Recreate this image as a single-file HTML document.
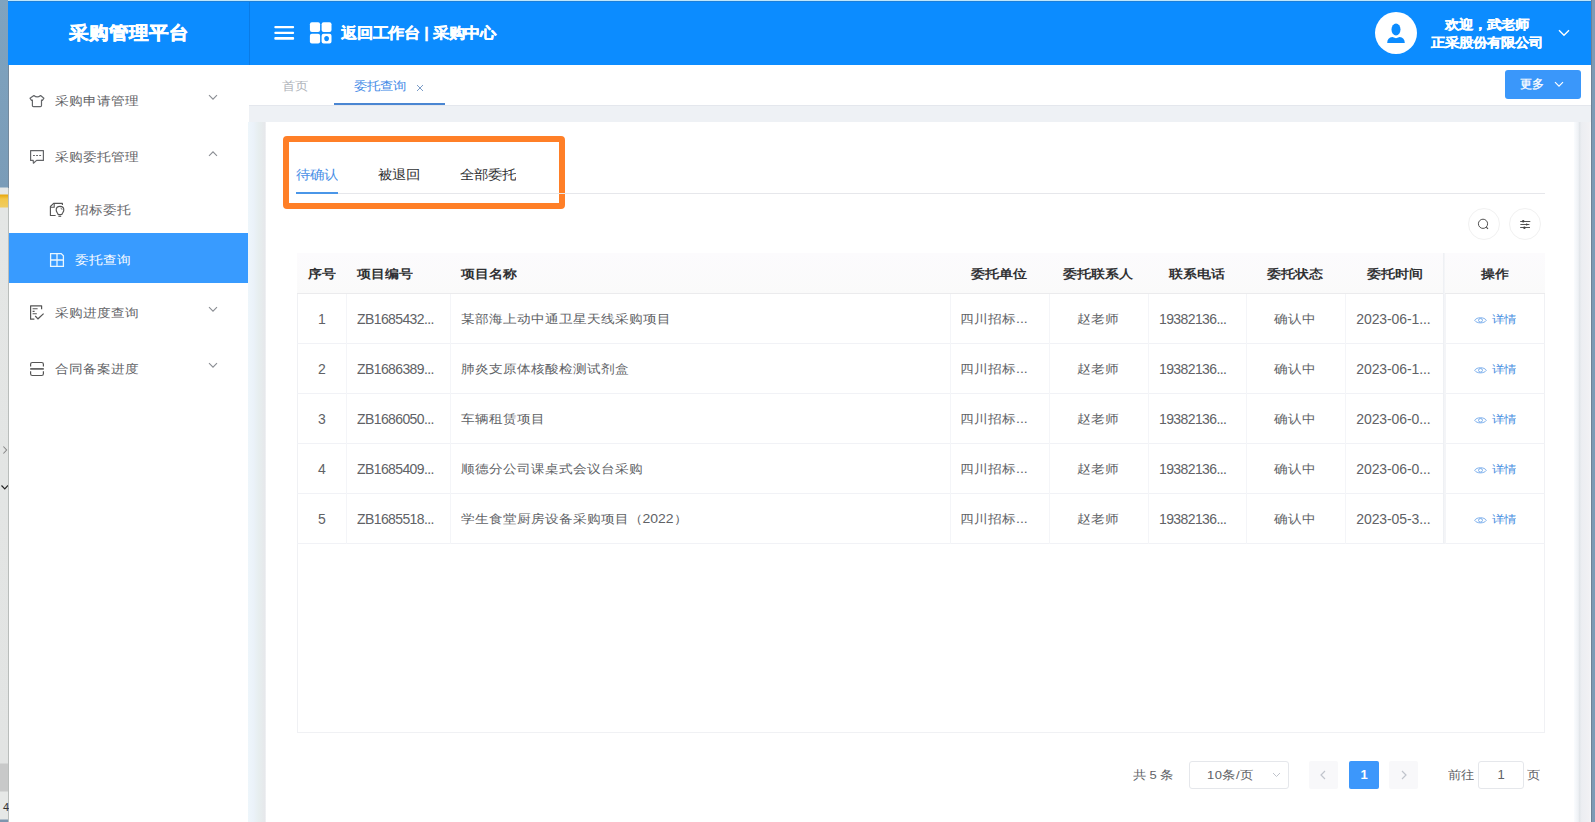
<!DOCTYPE html>
<html><head><meta charset="utf-8">
<style>
*{box-sizing:border-box;margin:0;padding:0}
html,body{width:1595px;height:822px;overflow:hidden;background:#eef1f5;font-family:"Liberation Sans",sans-serif;position:relative}
.a{position:absolute}
svg{display:block}
#lstrip{left:0;top:0;width:8px;height:822px;background:linear-gradient(#7fa3bf 0,#7a9cb8 187px,#e6e8e7 188px,#e6e8e7 194px,#e8a810 195px,#f2c64a 199px,#f0cc60 207px,#e4e6e5 208px,#e2e4e3 763px,#c8c9c9 764px,#c8c9c9 791px,#e6e8e7 792px,#e6e8e7 819px,#7d96ae 820px)}
#lstripedge{left:8px;top:65px;width:1px;height:757px;background:linear-gradient(#74899c 0,#74899c 123px,#b9bdbb 123px,#b9bdbb 100%)}
#rstrip{left:1591px;top:0;width:4px;height:822px;background:linear-gradient(90deg,#6e8295 0,#6e8295 25%,#7f9ab3 26%,#7a9cb8 100%)}
#header{left:8px;top:0;width:1583px;height:65px;background:#0c8cff}
#logo{left:8px;top:1px;width:241px;height:65px;color:#fff;font-size:20px;font-weight:bold;text-align:center;line-height:65px;-webkit-text-stroke:0.6px #fff;transform:scaleY(0.92)}
#hsep{left:249px;top:0;width:1px;height:65px;background:#0a7be6}
#sidebar{left:9px;top:65px;width:240px;height:757px;background:#fff}
#tabsbar{left:249px;top:65px;width:1342px;height:41px;background:#fff;border-bottom:1px solid #e4e7ed}
#card{left:266px;top:122px;width:1308px;height:700px;background:#fff}
#lgut{left:248px;top:122px;width:18px;height:700px;background:linear-gradient(90deg,#eef6fb 0,#ebf2f9 30%,#e7eeef 60%,#e6e8eb 92%,#f3f3f6 100%)}
#rgut{left:1574px;top:122px;width:17px;height:700px;background:linear-gradient(90deg,#fafcfe 0,#eef1f5 25%,#e2e6ea 32%,#eceef2 45%,#f1f1f4 90%,#f6fafc 100%)}
.mi{position:absolute;font-size:14px;color:#5f6266;line-height:20px;white-space:nowrap;transform:scaleY(0.88)}
.ic{position:absolute}
.arr{position:absolute}
.tab{position:absolute;top:164px;font-size:14px;color:#303133;line-height:20px;white-space:nowrap;transform:scaleY(0.9)}
.th{position:absolute;top:264px;font-size:14px;font-weight:bold;color:#303133;line-height:20px;white-space:nowrap;transform:scaleY(0.86)}
.td{position:absolute;font-size:14px;color:#606266;line-height:50px;white-space:nowrap;height:50px;transform:scaleY(0.88)}
.td.num,.td.dt{transform:scaleY(1.08)}
.num{letter-spacing:-0.6px}
.dt{letter-spacing:-0.1px}
.pg{position:absolute;top:765px;font-size:13px;color:#606266;line-height:20px;white-space:nowrap;transform:scaleY(0.9)}
</style></head><body>
<div id="lstrip" class="a"></div><div id="lstripedge" class="a"></div>
<svg class="a" style="left:1px;top:445px" width="7" height="50" viewBox="0 0 7 50"><path d="M2.4 1.5 L5.6 5 L2.4 8.5" fill="none" stroke="#888" stroke-width="1.1"/><path d="M0.5 40.5 L3.8 43.8 L7 40.5" fill="none" stroke="#222" stroke-width="1.2"/></svg>
<div class="a" style="left:3px;top:800px;font-size:11px;color:#333;line-height:14px">4</div>
<div id="rstrip" class="a"></div>
<div id="header" class="a"></div>
<div id="logo" class="a">采购管理平台</div>
<div id="hsep" class="a"></div>
<div class="a" style="left:8px;top:0;width:1583px;height:1px;background:#bfe6fb"></div><div class="a" style="left:8px;top:1px;width:1583px;height:1px;background:#1c7fd9"></div>

<!-- header left controls -->
<svg class="a" style="left:274px;top:25px" width="21" height="16" viewBox="0 0 21 16"><rect x="0.3" y="0.9" width="19.8" height="2.3" rx="1" fill="#fff"/><rect x="0.3" y="6.8" width="19.8" height="2.3" rx="1" fill="#fff"/><rect x="0.3" y="12.1" width="19.8" height="2.6" rx="1" fill="#fff"/></svg>
<svg class="a" style="left:309px;top:22px" width="23" height="22" viewBox="0 0 23 22"><rect x="0.9" y="0.2" width="10.2" height="9.9" rx="2" fill="#fff"/><rect x="12.6" y="0.2" width="9.9" height="9.9" rx="2" fill="#fff"/><rect x="0.9" y="11.8" width="10.2" height="9.6" rx="2" fill="#fff"/><path fill-rule="evenodd" fill="#fff" d="M14.6 11.8 H20.5 Q22.5 11.8 22.5 13.8 V19.4 Q22.5 21.4 20.5 21.4 H14.6 Q12.6 21.4 12.6 19.4 V13.8 Q12.6 11.8 14.6 11.8 Z M17.6 14 C16.2 14 15.2 15 15.2 16.6 C15.2 18.2 16.2 19.2 17.6 19.2 C19 19.2 20 18.2 20 16.6 C20 15 19 14 17.6 14 Z"/></svg>
<div class="a" style="left:341px;top:22px;font-size:16px;font-weight:bold;color:#fff;line-height:22px;white-space:nowrap;letter-spacing:-0.2px;-webkit-text-stroke:0.35px #fff;transform:scaleY(0.92)">返回工作台 | 采购中心</div>

<!-- header right -->
<div class="a" style="left:1375px;top:12px;width:42px;height:42px;border-radius:50%;background:#fff"></div>
<svg class="a" style="left:1386px;top:23px" width="21" height="21" viewBox="0 0 21 21"><ellipse cx="10" cy="6.5" rx="4.5" ry="6" fill="#0c8cff"/><path d="M1.2 20 C1.2 16.4 3.2 14.5 6.4 14.1 L10 15.2 L13.6 14.1 C16.8 14.5 18.8 16.4 18.8 20 Z" fill="#0c8cff"/></svg>
<div class="a" style="left:1431px;top:15px;width:112px;text-align:center;font-size:14px;font-weight:bold;color:#fff;line-height:18px;white-space:nowrap;-webkit-text-stroke:0.3px #fff;transform:scaleY(0.9)">欢迎，武老师</div><div class="a" style="left:1431px;top:33px;width:112px;text-align:center;font-size:14px;font-weight:bold;color:#fff;line-height:18px;white-space:nowrap;-webkit-text-stroke:0.3px #fff;transform:scaleY(0.9)">正采股份有限公司</div>
<svg class="a" style="left:1558px;top:29px" width="12" height="8" viewBox="0 0 12 8"><path d="M1 1.2 L6 6.2 L11 1.2" fill="none" stroke="#fff" stroke-width="1.4"/></svg>

<div id="sidebar" class="a"></div>
<!-- sidebar items -->
<svg class="ic" style="left:29px;top:94px" width="16" height="14" viewBox="0 0 16 14"><path d="M4.9 1.5 Q8.2 4.4 11.6 1.5 L14.9 4.2 L13.4 6.5 L12.5 6.1 L12.5 11.5 Q12.5 12.6 11.4 12.6 L4.5 12.6 Q3.4 12.6 3.4 11.5 L3.4 6.1 L2.5 6.5 L1 4.2 Z" fill="none" stroke="#646669" stroke-width="1.2" stroke-linejoin="round"/></svg>
<div class="mi" style="left:55px;top:91px">采购申请管理</div>
<svg class="arr" style="left:208px;top:94px" width="10" height="7" viewBox="0 0 10 7"><path d="M1 1.2 L5 5.2 L9 1.2" fill="none" stroke="#8a8d93" stroke-width="1.1"/></svg>

<svg class="ic" style="left:29px;top:149px" width="16" height="16" viewBox="0 0 16 16"><path d="M1.6 1.6 L14.4 1.6 L14.4 11.4 L7.6 11.4 L4.4 14.2 L4.2 11.4 L1.6 11.4 Z" fill="none" stroke="#646669" stroke-width="1.2" stroke-linejoin="round"/><path d="M4 6.5 H5.9 M7.1 6.5 H9 M10.2 6.5 H12.1" stroke="#646669" stroke-width="1"/></svg>
<div class="mi" style="left:55px;top:147px">采购委托管理</div>
<svg class="arr" style="left:208px;top:150px" width="10" height="7" viewBox="0 0 10 7"><path d="M1 5.8 L5 1.8 L9 5.8" fill="none" stroke="#8a8d93" stroke-width="1.1"/></svg>

<svg class="ic" style="left:49px;top:202px" width="16" height="16" viewBox="0 0 16 16"><path d="M13.4 3 V1.4 H4.6 L1.4 4.5 V13.5 H6.6" fill="none" stroke="#555" stroke-width="1.15" stroke-linejoin="round"/><path d="M1.4 5.3 H5.2 V1.4" fill="none" stroke="#555" stroke-width="1.1"/><path d="M11 4.4 C13.2 4.4 14.8 6 14.8 8 C14.8 9.8 13.5 10.7 12.8 12.5 L9.2 12.5 C8.5 10.7 7.2 9.8 7.2 8 C7.2 6 8.8 4.4 11 4.4 Z" fill="none" stroke="#555" stroke-width="1.15"/><path d="M9.4 14.2 H12.2" stroke="#555" stroke-width="1.3"/><path d="M11.6 6.1 Q12.9 6.5 13.1 7.7" fill="none" stroke="#555" stroke-width="0.9"/></svg>
<div class="mi" style="left:75px;top:200px">招标委托</div>

<div class="a" style="left:9px;top:233px;width:240px;height:50px;background:#389bff"></div>
<svg class="ic" style="left:49px;top:252px" width="16" height="16" viewBox="0 0 16 16"><path d="M1.6 1.6 L12.2 1.6 L14.4 3.8 L14.4 14.4 L1.6 14.4 Z M8 1.6 V14.4 M1.6 8 H14.4" fill="none" stroke="#e8f6ff" stroke-width="1.3"/></svg>
<div class="mi" style="left:75px;top:250px;color:#fff">委托查询</div>

<svg class="ic" style="left:29px;top:304px" width="16" height="17" viewBox="0 0 16 17"><path d="M5.4 15.2 L1.6 15.2 L1.6 1.8 L12.6 1.8 L12.6 5.2" fill="none" stroke="#555" stroke-width="1.2" stroke-linejoin="round"/><path d="M3.6 4.8 H8.6 M3.6 7.4 H5.6 M3.6 9.8 H7.8" stroke="#555" stroke-width="1.1"/><path d="M6.2 12 L9 14.8 L14.6 9.6" fill="none" stroke="#555" stroke-width="1.2"/></svg>
<div class="mi" style="left:55px;top:303px">采购进度查询</div>
<svg class="arr" style="left:208px;top:306px" width="10" height="7" viewBox="0 0 10 7"><path d="M1 1.2 L5 5.2 L9 1.2" fill="none" stroke="#8a8d93" stroke-width="1.1"/></svg>

<svg class="ic" style="left:29px;top:360px" width="16" height="17" viewBox="0 0 16 17"><path d="M1.6 6.4 V4.3 Q1.6 2.5 3.4 2.5 L12.6 2.5 Q14.4 2.5 14.4 4.3 V6.4 M1.6 11.2 V13.7 Q1.6 15.5 3.4 15.5 L12.6 15.5 Q14.4 15.5 14.4 13.7 V11.2" fill="none" stroke="#555" stroke-width="1.2"/><path d="M1.2 8.9 H14.8" stroke="#555" stroke-width="1.6"/></svg>
<div class="mi" style="left:55px;top:359px">合同备案进度</div>
<svg class="arr" style="left:208px;top:362px" width="10" height="7" viewBox="0 0 10 7"><path d="M1 1.2 L5 5.2 L9 1.2" fill="none" stroke="#8a8d93" stroke-width="1.1"/></svg>

<div id="tabsbar" class="a"></div>
<div class="a" style="left:282px;top:76px;font-size:13px;color:#b1b5bb;line-height:20px;transform:scaleY(0.9)">首页</div>
<div class="a" style="left:354px;top:76px;font-size:13px;color:#4088e6;line-height:20px;transform:scaleY(0.9)">委托查询</div>
<svg class="a" style="left:416px;top:84px" width="8" height="8" viewBox="0 0 8 8"><path d="M1 1 L7 7 M7 1 L1 7" stroke="#7a9cc8" stroke-width="1"/></svg>
<div class="a" style="left:334px;top:103px;width:111px;height:2px;background:#4a86d2"></div>

<div class="a" style="left:1505px;top:70px;width:76px;height:29px;border-radius:3px;background:#3a97fa"></div>
<div class="a" style="left:1520px;top:75px;font-size:12px;color:#fff;line-height:18px;-webkit-text-stroke:0.3px #fff">更多</div>
<svg class="a" style="left:1554px;top:81px" width="10" height="7" viewBox="0 0 10 7"><path d="M1 1.2 L5 5.2 L9 1.2" fill="none" stroke="#fff" stroke-width="1.2"/></svg>

<div id="lgut" class="a"></div><div id="rgut" class="a"></div><div id="card" class="a"></div>
<div class="a" style="left:283px;top:136px;width:282px;height:73px;border:6px solid #ff7f27;border-radius:4px"></div>
<div class="a" style="left:297px;top:193px;width:1248px;height:1px;background:#e6e7eb"></div>
<div class="tab" style="left:296px;color:#4a8fe6">待确认</div>
<div class="tab" style="left:378px">被退回</div>
<div class="tab" style="left:460px">全部委托</div>
<div class="a" style="left:296px;top:192px;width:42px;height:2px;background:#4a96e8"></div>
<div class="a" style="left:1468px;top:208px;width:32px;height:32px;border-radius:50%;border:1px solid #f1f1f1"></div>
<svg class="a" style="left:1477px;top:218px" width="13" height="13" viewBox="0 0 13 13"><circle cx="6" cy="5.8" r="4.6" fill="none" stroke="#4a4a4a" stroke-width="0.95"/><path d="M9.3 9.2 L11 10.9" stroke="#4a4a4a" stroke-width="1.1"/></svg>
<div class="a" style="left:1509px;top:208px;width:32px;height:32px;border-radius:50%;border:1px solid #f1f1f1"></div>
<svg class="a" style="left:1519px;top:219px" width="12" height="11" viewBox="0 0 12 11"><path d="M1.2 2.5 H11.3 M1.4 5.5 H10.4 M1.2 8.5 H11" stroke="#555" stroke-width="1"/><circle cx="4.2" cy="2.3" r="1.2" fill="#444"/><path d="M7.2 4.2 L9.6 5.5 L7.2 6.8 Z" fill="#444"/><circle cx="5.4" cy="8.7" r="1.2" fill="#444"/></svg>
<div class="a" style="left:297px;top:253px;width:1248px;height:480px;border:1px solid #f0f1f4;border-top:none"></div>
<div class="a" style="left:297px;top:253px;width:1248px;height:41px;background:linear-gradient(#fcfbfd,#fafafa);border-bottom:1px solid #ebebed"></div>
<div class="th" style="left:297px;width:49.0px;text-align:center">序号</div>
<div class="th" style="left:357px;width:92.5px">项目编号</div>
<div class="th" style="left:460.5px;width:489.2px">项目名称</div>
<div class="th" style="left:949.7px;width:99.1px;text-align:center">委托单位</div>
<div class="th" style="left:1048.8px;width:99.2px;text-align:center">委托联系人</div>
<div class="th" style="left:1148px;width:97.5px;text-align:center">联系电话</div>
<div class="th" style="left:1245.5px;width:99.8px;text-align:center">委托状态</div>
<div class="th" style="left:1345.3px;width:99.4px;text-align:center">委托时间</div>
<div class="th" style="left:1444.7px;width:100.3px;text-align:center">操作</div>
<div class="a" style="left:297px;top:343px;width:1248px;height:1px;background:#f1f2f6"></div>
<div class="td num" style="left:297px;top:294px;width:49.0px;text-align:center">1</div>
<div class="td num" style="left:357px;top:294px;width:92.5px">ZB1685432...</div>
<div class="td" style="left:460.5px;top:294px;width:489.2px">某部海上动中通卫星天线采购项目</div>
<div class="td" style="left:960px;top:294px;width:88.1px">四川招标...</div>
<div class="td" style="left:1048.8px;top:294px;width:99.2px;text-align:center">赵老师</div>
<div class="td num" style="left:1159px;top:294px;width:86.5px">19382136...</div>
<div class="td" style="left:1245.5px;top:294px;width:99.8px;text-align:center">确认中</div>
<div class="td dt" style="left:1356.3px;top:294px;width:88.4px">2023-06-1...</div>
<div class="td" style="left:1444.7px;top:294px;width:100.3px;text-align:center"><svg style="display:inline-block;vertical-align:-1px;margin-right:5px" width="13" height="9" viewBox="0 0 13 9"><path d="M0.7 4.5 C2.6 0.6 10.4 0.6 12.3 4.5 C10.4 8.4 2.6 8.4 0.7 4.5 Z" fill="none" stroke="#6aa4ea" stroke-width="0.9"/><circle cx="6.5" cy="4.5" r="2" fill="none" stroke="#6aa4ea" stroke-width="0.9"/></svg><span style="font-size:12px;color:#4a90e2">详情</span></div>
<div class="a" style="left:297px;top:393px;width:1248px;height:1px;background:#f1f2f6"></div>
<div class="td num" style="left:297px;top:344px;width:49.0px;text-align:center">2</div>
<div class="td num" style="left:357px;top:344px;width:92.5px">ZB1686389...</div>
<div class="td" style="left:460.5px;top:344px;width:489.2px">肺炎支原体核酸检测试剂盒</div>
<div class="td" style="left:960px;top:344px;width:88.1px">四川招标...</div>
<div class="td" style="left:1048.8px;top:344px;width:99.2px;text-align:center">赵老师</div>
<div class="td num" style="left:1159px;top:344px;width:86.5px">19382136...</div>
<div class="td" style="left:1245.5px;top:344px;width:99.8px;text-align:center">确认中</div>
<div class="td dt" style="left:1356.3px;top:344px;width:88.4px">2023-06-1...</div>
<div class="td" style="left:1444.7px;top:344px;width:100.3px;text-align:center"><svg style="display:inline-block;vertical-align:-1px;margin-right:5px" width="13" height="9" viewBox="0 0 13 9"><path d="M0.7 4.5 C2.6 0.6 10.4 0.6 12.3 4.5 C10.4 8.4 2.6 8.4 0.7 4.5 Z" fill="none" stroke="#6aa4ea" stroke-width="0.9"/><circle cx="6.5" cy="4.5" r="2" fill="none" stroke="#6aa4ea" stroke-width="0.9"/></svg><span style="font-size:12px;color:#4a90e2">详情</span></div>
<div class="a" style="left:297px;top:443px;width:1248px;height:1px;background:#f1f2f6"></div>
<div class="td num" style="left:297px;top:394px;width:49.0px;text-align:center">3</div>
<div class="td num" style="left:357px;top:394px;width:92.5px">ZB1686050...</div>
<div class="td" style="left:460.5px;top:394px;width:489.2px">车辆租赁项目</div>
<div class="td" style="left:960px;top:394px;width:88.1px">四川招标...</div>
<div class="td" style="left:1048.8px;top:394px;width:99.2px;text-align:center">赵老师</div>
<div class="td num" style="left:1159px;top:394px;width:86.5px">19382136...</div>
<div class="td" style="left:1245.5px;top:394px;width:99.8px;text-align:center">确认中</div>
<div class="td dt" style="left:1356.3px;top:394px;width:88.4px">2023-06-0...</div>
<div class="td" style="left:1444.7px;top:394px;width:100.3px;text-align:center"><svg style="display:inline-block;vertical-align:-1px;margin-right:5px" width="13" height="9" viewBox="0 0 13 9"><path d="M0.7 4.5 C2.6 0.6 10.4 0.6 12.3 4.5 C10.4 8.4 2.6 8.4 0.7 4.5 Z" fill="none" stroke="#6aa4ea" stroke-width="0.9"/><circle cx="6.5" cy="4.5" r="2" fill="none" stroke="#6aa4ea" stroke-width="0.9"/></svg><span style="font-size:12px;color:#4a90e2">详情</span></div>
<div class="a" style="left:297px;top:493px;width:1248px;height:1px;background:#f1f2f6"></div>
<div class="td num" style="left:297px;top:444px;width:49.0px;text-align:center">4</div>
<div class="td num" style="left:357px;top:444px;width:92.5px">ZB1685409...</div>
<div class="td" style="left:460.5px;top:444px;width:489.2px">顺德分公司课桌式会议台采购</div>
<div class="td" style="left:960px;top:444px;width:88.1px">四川招标...</div>
<div class="td" style="left:1048.8px;top:444px;width:99.2px;text-align:center">赵老师</div>
<div class="td num" style="left:1159px;top:444px;width:86.5px">19382136...</div>
<div class="td" style="left:1245.5px;top:444px;width:99.8px;text-align:center">确认中</div>
<div class="td dt" style="left:1356.3px;top:444px;width:88.4px">2023-06-0...</div>
<div class="td" style="left:1444.7px;top:444px;width:100.3px;text-align:center"><svg style="display:inline-block;vertical-align:-1px;margin-right:5px" width="13" height="9" viewBox="0 0 13 9"><path d="M0.7 4.5 C2.6 0.6 10.4 0.6 12.3 4.5 C10.4 8.4 2.6 8.4 0.7 4.5 Z" fill="none" stroke="#6aa4ea" stroke-width="0.9"/><circle cx="6.5" cy="4.5" r="2" fill="none" stroke="#6aa4ea" stroke-width="0.9"/></svg><span style="font-size:12px;color:#4a90e2">详情</span></div>
<div class="a" style="left:297px;top:543px;width:1248px;height:1px;background:#f1f2f6"></div>
<div class="td num" style="left:297px;top:494px;width:49.0px;text-align:center">5</div>
<div class="td num" style="left:357px;top:494px;width:92.5px">ZB1685518...</div>
<div class="td" style="left:460.5px;top:494px;width:489.2px">学生食堂厨房设备采购项目（2022）</div>
<div class="td" style="left:960px;top:494px;width:88.1px">四川招标...</div>
<div class="td" style="left:1048.8px;top:494px;width:99.2px;text-align:center">赵老师</div>
<div class="td num" style="left:1159px;top:494px;width:86.5px">19382136...</div>
<div class="td" style="left:1245.5px;top:494px;width:99.8px;text-align:center">确认中</div>
<div class="td dt" style="left:1356.3px;top:494px;width:88.4px">2023-05-3...</div>
<div class="td" style="left:1444.7px;top:494px;width:100.3px;text-align:center"><svg style="display:inline-block;vertical-align:-1px;margin-right:5px" width="13" height="9" viewBox="0 0 13 9"><path d="M0.7 4.5 C2.6 0.6 10.4 0.6 12.3 4.5 C10.4 8.4 2.6 8.4 0.7 4.5 Z" fill="none" stroke="#6aa4ea" stroke-width="0.9"/><circle cx="6.5" cy="4.5" r="2" fill="none" stroke="#6aa4ea" stroke-width="0.9"/></svg><span style="font-size:12px;color:#4a90e2">详情</span></div>
<div class="a" style="left:346.0px;top:294px;width:1px;height:250px;background:#f4f5f8"></div>
<div class="a" style="left:449.5px;top:294px;width:1px;height:250px;background:#f4f5f8"></div>
<div class="a" style="left:949.7px;top:294px;width:1px;height:250px;background:#f4f5f8"></div>
<div class="a" style="left:1048.8px;top:294px;width:1px;height:250px;background:#f4f5f8"></div>
<div class="a" style="left:1148.0px;top:294px;width:1px;height:250px;background:#f4f5f8"></div>
<div class="a" style="left:1245.5px;top:294px;width:1px;height:250px;background:#f4f5f8"></div>
<div class="a" style="left:1345.3px;top:294px;width:1px;height:250px;background:#f4f5f8"></div>
<div class="a" style="left:1444.7px;top:294px;width:1px;height:250px;background:#f4f5f8"></div>
<div class="a" style="left:1443px;top:253px;width:2px;height:290px;background:linear-gradient(90deg,#eceef2,#f6f7f9)"></div>
<div class="pg" style="left:1133px">共 5 条</div>
<div class="a" style="left:1189px;top:761px;width:100px;height:28px;border:1px solid #e5e7eb;border-radius:3px"></div>
<div class="pg" style="left:1207px;letter-spacing:0.5px">10条/页</div>
<svg class="a" style="left:1272px;top:772px" width="9" height="6" viewBox="0 0 9 6"><path d="M1 1 L4.5 4.5 L8 1" fill="none" stroke="#c0c4cc" stroke-width="1"/></svg>
<div class="a" style="left:1309px;top:761px;width:29px;height:28px;background:#f8f8fa;border-radius:2px"></div>
<svg class="a" style="left:1320px;top:770px" width="6" height="10" viewBox="0 0 6 10"><path d="M5 1 L1 5 L5 9" fill="none" stroke="#c0c4cc" stroke-width="1.2"/></svg>
<div class="a" style="left:1349px;top:761px;width:30px;height:28px;background:#3c97fb;border-radius:2px;color:#fff;font-weight:bold;font-size:13px;text-align:center;line-height:28px">1</div>
<div class="a" style="left:1389px;top:761px;width:29px;height:28px;background:#f8f8fa;border-radius:2px"></div>
<svg class="a" style="left:1401px;top:770px" width="6" height="10" viewBox="0 0 6 10"><path d="M1 1 L5 5 L1 9" fill="none" stroke="#c0c4cc" stroke-width="1.2"/></svg>
<div class="pg" style="left:1448px">前往</div>
<div class="a" style="left:1478px;top:761px;width:46px;height:28px;border:1px solid #e5e7eb;border-radius:3px;text-align:center;line-height:26px;font-size:13px;color:#606266">1</div>
<div class="pg" style="left:1527px">页</div>
</body></html>
